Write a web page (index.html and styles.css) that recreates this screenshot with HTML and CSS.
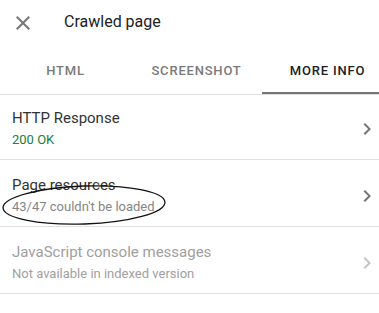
FILE: index.html
```html
<!DOCTYPE html>
<html lang="en">
<head>
    <meta charset="UTF-8">
    <meta name="viewport" content="width=device-width, initial-scale=1.0">
    <title>Crawled page</title>
    <link rel="stylesheet" href="styles.css">
</head>
<body>
    <header class="topbar">
        <span class="close-btn">
            <svg viewBox="0 0 24 24" width="24" height="24"><path d="M19 6.41L17.59 5 12 10.59 6.41 5 5 6.41 10.59 12 5 17.59 6.41 19 12 13.41 17.59 19 19 17.59 13.41 12z"/></svg>
        </span>
        <h1 class="topbar-title">Crawled page</h1>
    </header>
    <nav class="tabs">
        <div class="tab">HTML</div>
        <div class="tab">Screenshot</div>
        <div class="tab active">More info</div>
    </nav>
    <main class="info-list">
        <div class="info-row">
            <div class="info-text">
                <div class="info-title">HTTP Response</div>
                <div class="info-sub ok">200 OK</div>
            </div>
            <svg class="chevron" viewBox="0 0 24 24" width="24" height="24"><path d="M10 6L8.59 7.41 13.17 12l-4.58 4.59L10 18l6-6z"/></svg>
        </div>
        <div class="info-row">
            <div class="info-text">
                <div class="info-title">Page resources</div>
                <div class="info-sub">43/47 couldn't be loaded</div>
            </div>
            <svg class="chevron" viewBox="0 0 24 24" width="24" height="24"><path d="M10 6L8.59 7.41 13.17 12l-4.58 4.59L10 18l6-6z"/></svg>
            <!-- hand-drawn annotation -->
            <svg class="mark" viewBox="0 0 180 50" width="180" height="50"><ellipse cx="84" cy="25" rx="81" ry="19" transform="rotate(-2 84 25)"/></svg>
        </div>
        <div class="info-row disabled">
            <div class="info-text">
                <div class="info-title">JavaScript console messages</div>
                <div class="info-sub">Not available in indexed version</div>
            </div>
            <svg class="chevron" viewBox="0 0 24 24" width="24" height="24"><path d="M10 6L8.59 7.41 13.17 12l-4.58 4.59L10 18l6-6z"/></svg>
        </div>
    </main>
</body>
</html>
```

FILE: styles.css
```css
body {
    font-family: Roboto, "Liberation Sans", Arial, sans-serif;
    margin: 0;
    padding: 0;
    background-color: #fff;
    color: #212121;
    overflow: hidden;
}

.topbar {
    display: flex;
    align-items: flex-start;
    height: 48px;
}

.close-btn {
    display: block;
    width: 24px;
    height: 24px;
    margin: 11px 0 0 11px;
    fill: #757575;
}

.topbar-title {
    margin: 12px 0 0 29px;
    font-size: 16px;
    font-weight: 400;
    line-height: 20px;
    color: #212121;
}

.tabs {
    display: flex;
    width: 393px;
    border-bottom: 1px solid #e0e0e0;
}

.tab {
    flex: 0 0 131px;
    height: 46px;
    line-height: 46px;
    text-align: center;
    font-size: 13px;
    font-weight: 500;
    letter-spacing: 0.8px;
    text-transform: uppercase;
    color: #7a7a7a;
    box-sizing: border-box;
}

.tab.active {
    color: #212121;
    border-bottom: 2px solid #757575;
}

.info-row {
    position: relative;
    display: flex;
    align-items: center;
    padding: 15px 0 9px 12px;
    border-bottom: 1px solid #e0e0e0;
}

.info-row:first-child {
    padding-top: 13px;
}

.info-text {
    flex: 1;
}

.info-title {
    font-size: 15px;
    line-height: 20px;
    color: #333;
}

.info-sub {
    margin-top: 2px;
    font-size: 13px;
    line-height: 20px;
    color: #868686;
}

.info-sub.ok {
    color: #188038;
}

.chevron {
    flex: none;
    fill: #757575;
}

.disabled .info-title,
.disabled .info-sub {
    color: #a0a0a0;
}

.disabled .chevron {
    fill: #c4c4c4;
}

.mark {
    position: absolute;
    left: 0;
    top: 20px;
    fill: none;
    stroke: #111;
    stroke-width: 1.3;
}
```
